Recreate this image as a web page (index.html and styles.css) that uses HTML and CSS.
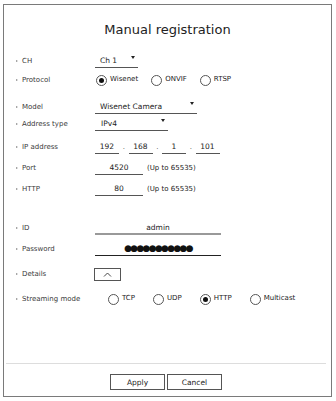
FILE: index.html
```html
<!DOCTYPE html>
<html>
<head>
<meta charset="utf-8">
<title>Manual registration</title>
<link rel="stylesheet" href="styles.css">
</head>
<body>
<div class="panel">
  <h1 class="title">Manual registration</h1>
  <div class="form">
    <div class="row r-ch">
      <div class="label"><span class="bullet"></span>CH</div>
      <div class="field select w-ch"><span class="val">Ch 1</span><span class="caret"></span></div>
    </div>
    <div class="row r-protocol">
      <div class="label"><span class="bullet"></span>Protocol</div>
      <div class="options opt-protocol">
        <div class="opt"><span class="radio on"></span><span class="opt-text">Wisenet</span></div>
        <div class="opt"><span class="radio"></span><span class="opt-text">ONVIF</span></div>
        <div class="opt"><span class="radio"></span><span class="opt-text">RTSP</span></div>
      </div>
    </div>
    <div class="row r-model">
      <div class="label"><span class="bullet"></span>Model</div>
      <div class="field select w-model"><span class="val">Wisenet Camera</span><span class="caret"></span></div>
    </div>
    <div class="row r-addr">
      <div class="label"><span class="bullet"></span>Address type</div>
      <div class="field select w-addr"><span class="val">IPv4</span><span class="caret"></span></div>
    </div>
    <div class="row r-ip">
      <div class="label"><span class="bullet"></span>IP address</div>
      <div class="ip">
        <div class="field center w-oct">192</div><span class="ipdot">.</span>
        <div class="field center w-oct">168</div><span class="ipdot">.</span>
        <div class="field center w-oct">1</div><span class="ipdot">.</span>
        <div class="field center w-oct">101</div>
      </div>
    </div>
    <div class="row r-port">
      <div class="label"><span class="bullet"></span>Port</div>
      <div class="field center w-port">4520</div><span class="hint">(Up to 65535)</span>
    </div>
    <div class="row r-http">
      <div class="label"><span class="bullet"></span>HTTP</div>
      <div class="field center w-port">80</div><span class="hint">(Up to 65535)</span>
    </div>
    <div class="row r-id">
      <div class="label"><span class="bullet"></span>ID</div>
      <div class="field center w-long field-id">admin</div>
    </div>
    <div class="row r-pw">
      <div class="label"><span class="bullet"></span>Password</div>
      <div class="field center w-long field-pw"><span class="dots">●●●●●●●●●●●</span></div>
    </div>
    <div class="row r-details">
      <div class="label"><span class="bullet"></span>Details</div>
      <div class="details-btn">
        <svg width="9" height="5" viewBox="0 0 9 5"><polyline points="1,4.5 4.5,1 8,4.5" fill="none" stroke="#333" stroke-width="0.9"/></svg>
      </div>
    </div>
    <div class="row r-stream">
      <div class="label"><span class="bullet"></span>Streaming mode</div>
      <div class="options opt-stream">
        <div class="opt"><span class="radio"></span><span class="opt-text">TCP</span></div>
        <div class="opt"><span class="radio"></span><span class="opt-text">UDP</span></div>
        <div class="opt"><span class="radio on"></span><span class="opt-text">HTTP</span></div>
        <div class="opt"><span class="radio"></span><span class="opt-text">Multicast</span></div>
      </div>
    </div>
  </div>
  <div class="footer">
    <button class="btn">Apply</button>
    <button class="btn">Cancel</button>
  </div>
</div>
</body>
</html>
```

FILE: styles.css
```css
html, body {
  margin: 0;
  padding: 0;
  background: #fff;
}
body {
  font-family: "DejaVu Sans", "Liberation Sans", sans-serif;
  color: #222;
}
.panel {
  box-sizing: border-box;
  margin: 4px 0 0 3px;
  width: 329px;
  height: 393px;
  border: 1px solid #7a7a7a;
  display: flex;
  flex-direction: column;
}
.title {
  margin: 15px 0 0 0;
  height: 20px;
  line-height: 20px;
  font-size: 13px;
  font-weight: normal;
  text-align: center;
  color: #222;
}
.form {
  display: flex;
  flex-direction: column;
  padding-left: 12px;
}
.row {
  height: 16px;
  display: flex;
  align-items: center;
}
.r-ch { margin-top: 13px; }
.r-protocol { margin-top: 3px; }
.r-model { margin-top: 11px; }
.r-addr { margin-top: 1px; }
.r-ip { margin-top: 7px; }
.r-port { margin-top: 5px; }
.r-http { margin-top: 5px; }
.r-id { margin-top: 23px; }
.r-pw { margin-top: 5px; }
.r-details { margin-top: 9px; }
.r-stream { margin-top: 9px; }

.label {
  width: 79px;
  flex: none;
  display: flex;
  align-items: center;
  font-size: 7px;
  color: #3a3a3a;
}
.bullet {
  width: 0;
  height: 0;
  border-left: 2px solid #888;
  border-top: 1.5px solid transparent;
  border-bottom: 1.5px solid transparent;
  margin-right: 4px;
}
.field {
  box-sizing: border-box;
  height: 14px;
  line-height: 13px;
  border-bottom: 1px solid #555;
  font-size: 7.5px;
  color: #222;
  display: flex;
  flex: none;
}
.field.center {
  justify-content: center;
}
.select {
  padding: 0 3px 0 5px;
}
.select .val {
  flex: 1;
}
.caret {
  align-self: flex-start;
  margin-top: 2px;
  width: 0;
  height: 0;
  border-left: 2px solid transparent;
  border-right: 2px solid transparent;
  border-top: 3px solid #222;
}
.w-ch { width: 43px; }
.w-model { width: 102px; }
.w-addr { width: 73px; padding-left: 6px; }
.w-oct { width: 24px; }
.w-port { width: 48px; }
.w-long { width: 126px; }

.ip {
  display: flex;
  align-items: center;
}
.ipdot {
  width: 9.5px;
  text-align: center;
  font-size: 7px;
  color: #555;
  line-height: 14px;
}
.hint {
  margin-left: 4px;
  font-size: 7px;
  color: #222;
  margin-bottom: 1px;
}
.field-id {
  border-bottom: 2px solid #999;
}
.field-pw {
  border-bottom: 1.5px solid #222;
}
.dots {
  font-size: 9px;
  letter-spacing: -1.7px;
  color: #111;
}
.details-btn {
  box-sizing: border-box;
  width: 27px;
  height: 13px;
  margin-left: -1px;
  border: 1px solid #555;
  display: flex;
  align-items: center;
  justify-content: center;
}
.details-btn svg {
  display: block;
}
.options {
  display: flex;
  align-items: center;
}
.opt-protocol {
  margin-left: 1px;
  gap: 13px;
}
.opt-stream {
  margin-left: 13px;
  gap: 18px;
}
.opt {
  display: flex;
  align-items: center;
}
.radio {
  box-sizing: border-box;
  width: 11px;
  height: 11px;
  border: 1px solid #555;
  border-radius: 50%;
  display: flex;
  align-items: center;
  justify-content: center;
  background: #fff;
}
.radio.on::after {
  content: "";
  width: 5px;
  height: 5px;
  border-radius: 50%;
  background: #111;
}
.opt-text {
  margin-left: 3px;
  font-size: 7px;
  color: #222;
  margin-bottom: 3px;
}
.footer {
  margin: auto 5px 0 2px;
  border-top: 1px solid #ddd;
  padding: 10px 0 6px 0;
  display: flex;
  justify-content: center;
  gap: 2px;
}
.btn {
  box-sizing: border-box;
  width: 55px;
  height: 16px;
  margin: 0;
  padding: 0;
  border: 1px solid #555;
  background: #fff;
  font-family: "DejaVu Sans", "Liberation Sans", sans-serif;
  font-size: 7.5px;
  color: #222;
}
```
